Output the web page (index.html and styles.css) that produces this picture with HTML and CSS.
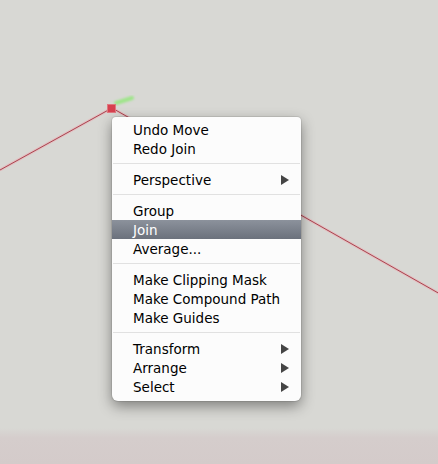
FILE: index.html
```html
<!DOCTYPE html>
<html>
<head>
<meta charset="utf-8">
<link rel="stylesheet" href="styles.css">
</head>
<body>
<div class="canvas">
  <div class="band"></div>
  <svg class="art" width="438" height="464" viewBox="0 0 438 464">
    <defs>
      <filter id="blur1" x="-20%" y="-50%" width="140%" height="200%"><feGaussianBlur stdDeviation="1.2"/></filter>
    </defs>
    <line x1="0" y1="170" x2="112" y2="108" stroke="#e3bfc1" stroke-width="3"/>
    <line x1="0" y1="170" x2="112" y2="108" stroke="#a9444f" stroke-width="1"/>
    <line x1="112" y1="108" x2="440" y2="294" stroke="#e3bfc1" stroke-width="3"/>
    <line x1="112" y1="108" x2="440" y2="294" stroke="#a9444f" stroke-width="1"/>
    <line x1="116" y1="103" x2="132" y2="98" stroke="#9fe58a" stroke-width="4" stroke-linecap="round" filter="url(#blur1)"/>
    <rect x="107.5" y="104.5" width="8" height="8" fill="#d7414f" stroke="#e07880" stroke-width="1"/>
  </svg>
  <div class="menu">
    <div class="item">Undo Move</div>
    <div class="item">Redo Join</div>
    <div class="sep"></div>
    <div class="item">Perspective<span class="arrow"></span></div>
    <div class="sep"></div>
    <div class="item">Group</div>
    <div class="item active">Join</div>
    <div class="item">Average...</div>
    <div class="sep"></div>
    <div class="item">Make Clipping Mask</div>
    <div class="item">Make Compound Path</div>
    <div class="item">Make Guides</div>
    <div class="sep"></div>
    <div class="item">Transform<span class="arrow"></span></div>
    <div class="item">Arrange<span class="arrow"></span></div>
    <div class="item">Select<span class="arrow"></span></div>
  </div>
</div>
</body>
</html>
```
FILE: styles.css
```css
html, body {
  margin: 0;
  padding: 0;
}
body {
  width: 438px;
  height: 464px;
  overflow: hidden;
  font-family: "DejaVu Sans", "Liberation Sans", sans-serif;
}
.canvas {
  position: relative;
  width: 438px;
  height: 464px;
  background: #d8d8d4;
  overflow: hidden;
}
.band {
  position: absolute;
  left: 0;
  right: 0;
  top: 428px;
  bottom: 0;
  background: linear-gradient(to bottom, rgba(213, 205, 204, 0), #d5cdcc 10px, #d4cbca);
}
.art {
  position: absolute;
  left: 0;
  top: 0;
}
.menu {
  position: absolute;
  left: 112px;
  top: 117px;
  width: 189px;
  box-sizing: border-box;
  padding: 3px 0 5px;
  background: #fcfcfc;
  border-radius: 4px 4px 6px 6px;
  box-shadow: 0 0 0 1px rgba(0, 0, 0, 0.08), 0 5px 14px rgba(0, 0, 0, 0.42);
}
.item {
  position: relative;
  height: 19px;
  box-sizing: border-box;
  padding: 1px 0 0 21px;
  line-height: 18px;
  font-size: 13.5px;
  color: #000;
  white-space: nowrap;
}
.item.active {
  background: linear-gradient(to bottom, #8c929c, #6b717c);
  color: #fff;
}
.arrow {
  position: absolute;
  right: 12px;
  top: 5px;
  width: 0;
  height: 0;
  border-top: 5px solid transparent;
  border-bottom: 5px solid transparent;
  border-left: 8px solid #454545;
}
.sep {
  height: 1px;
  margin: 5px 1px 6px;
  background: #e1e1e1;
}
```
